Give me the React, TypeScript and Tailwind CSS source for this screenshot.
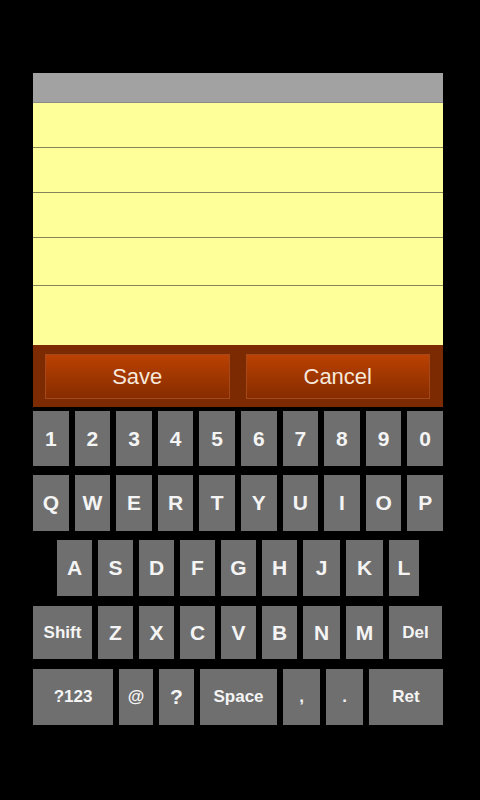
import React from "react";

const font = { fontFamily: '"Liberation Sans", Arial, sans-serif' };

function Key({ label, cls = "flex-1", small = false }: { label: string; cls?: string; small?: boolean }) {
  return (
    <div
      className={`${cls} h-full bg-[#6f6f6f] flex items-center justify-center text-[#f4f4f4] font-bold ${
        small ? "text-[17px]" : "text-[21px]"
      }`}
    >
      {label}
    </div>
  );
}

export default function App() {
  const row1 = ["1", "2", "3", "4", "5", "6", "7", "8", "9", "0"];
  const row2 = ["Q", "W", "E", "R", "T", "Y", "U", "I", "O", "P"];
  return (
    <div className="w-[480px] h-[800px] bg-black overflow-hidden" style={font}>
      <div className="w-[410px] ml-[33px] pt-[73px] flex flex-col">
        <div className="h-[30px] bg-[#a2a2a2] border-b border-[#8a8a8a]" />
        <div className="bg-[#ffff99] flex flex-col">
          <div className="h-[45px] border-b border-[#86845a]" />
          <div className="h-[45px] border-b border-[#86845a]" />
          <div className="h-[45px] border-b border-[#86845a]" />
          <div className="h-[48px] border-b border-[#86845a]" />
          <div className="h-[59px]" />
        </div>
        <div className="h-[62px] bg-[#7b2a02] flex items-center gap-[16px] pl-[12px] pr-[13px]">
          <div className="flex-1 h-[45px] flex items-center justify-center border border-[#a5481c] bg-gradient-to-b from-[#bb4102] to-[#862c00] text-[#f6e9dc] text-[22px]">
            Save
          </div>
          <div className="flex-1 h-[45px] flex items-center justify-center border border-[#a5481c] bg-gradient-to-b from-[#bb4102] to-[#862c00] text-[#f6e9dc] text-[22px]">
            Cancel
          </div>
        </div>
        <div className="mt-[4px] h-[55px] flex gap-[6px]">
          {row1.map((k) => (
            <Key key={k} label={k} />
          ))}
        </div>
        <div className="mt-[9px] h-[56px] flex gap-[6px]">
          {row2.map((k) => (
            <Key key={k} label={k} />
          ))}
        </div>
        <div className="mt-[9px] h-[56px] flex gap-[6px] pl-[24px]">
          <Key label="A" cls="w-[35px]" />
          <Key label="S" cls="w-[35px]" />
          <Key label="D" cls="w-[35px]" />
          <Key label="F" cls="w-[35px]" />
          <Key label="G" cls="w-[35px]" />
          <Key label="H" cls="w-[35px]" />
          <Key label="J" cls="w-[37px]" />
          <Key label="K" cls="w-[37px]" />
          <Key label="L" cls="w-[30px]" />
        </div>
        <div className="mt-[10px] h-[53px] flex gap-[6px]">
          <Key label="Shift" cls="w-[59px]" small />
          <Key label="Z" cls="w-[35px]" />
          <Key label="X" cls="w-[35px]" />
          <Key label="C" cls="w-[35px]" />
          <Key label="V" cls="w-[35px]" />
          <Key label="B" cls="w-[35px]" />
          <Key label="N" cls="w-[37px]" />
          <Key label="M" cls="w-[37px]" />
          <Key label="Del" cls="w-[53px]" small />
        </div>
        <div className="mt-[10px] h-[56px] flex gap-[6px]">
          <Key label="?123" cls="w-[80px]" small />
          <Key label="@" cls="w-[34px]" small />
          <Key label="?" cls="w-[35px]" />
          <Key label="Space" cls="w-[77px]" small />
          <Key label="," cls="w-[37px]" small />
          <Key label="." cls="w-[37px]" small />
          <Key label="Ret" cls="w-[74px]" small />
        </div>
      </div>
    </div>
  );
}
